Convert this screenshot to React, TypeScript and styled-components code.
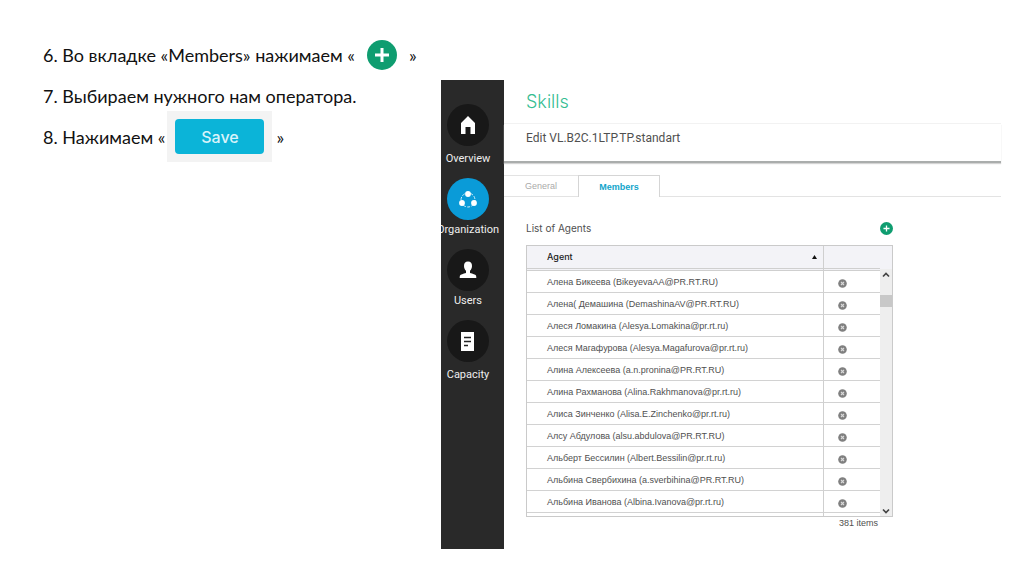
import React from "react";
import styled, { createGlobalStyle } from "styled-components";

const GlobalStyle = createGlobalStyle`
  *, *::before, *::after { box-sizing: border-box; }
  body { margin: 0; background: #fff; }
  button { font: inherit; border: 0; padding: 0; background: none; cursor: pointer; }
  h1, h2, p, ol { margin: 0; padding: 0; font-weight: 400; }
`;

const Slide = styled.main`
  display: grid;
  grid-template-columns: 398px minmax(0, 1fr);
  align-items: start;
  padding: 34px 23px 25px 43px;
`;

const Steps = styled.ol`
  list-style: none;
  font-family: Lato, "Open Sans", sans-serif;
  font-size: 18px;
  line-height: 24px;
  color: #111;
`;

const Step = styled.li`
  display: flex;
  align-items: center;
  height: 41px;
  white-space: nowrap;
`;

const AddButton = styled.button<{ $size: number; $gap?: number }>`
  display: block;
  flex: none;
  width: ${(p) => p.$size}px;
  height: ${(p) => p.$size}px;
  margin: 0 ${(p) => p.$gap ?? 0}px;
  svg { display: block; width: 100%; height: 100%; }
`;

const SaveFrame = styled.span`
  display: inline-flex;
  padding: 8px;
  margin: 0 4px 0 2px;
  background: #f3f3f3;
`;

const SaveButton = styled.button`
  width: 89px;
  height: 35px;
  border-radius: 4px;
  background: #0bb4d8;
  color: #d9f3fa;
  font-family: Inter, sans-serif;
  font-size: 16px;
  font-weight: 500;
`;

const AppWindow = styled.section`
  display: grid;
  grid-template-columns: 63px minmax(0, 1fr);
  margin-top: 46px;
  min-height: 469px;
  font-family: "Liberation Sans", Arial, sans-serif;
  color: #505050;
`;

const Sidebar = styled.nav`
  display: flex;
  flex-direction: column;
  align-items: center;
  gap: 12px;
  padding: 24px 9px 0 0;
  overflow: hidden;
  background: #292929;
`;

const NavLink = styled.a<{ $gap: number }>`
  display: flex;
  flex-direction: column;
  align-items: center;
  gap: ${(p) => p.$gap}px;
  color: #eee;
  font-family: Roboto, sans-serif;
  font-size: 11px;
  line-height: 14px;
  text-decoration: none;
`;

const NavIcon = styled.span<{ $active?: boolean }>`
  display: flex;
  align-items: center;
  justify-content: center;
  width: 42px;
  height: 42px;
  border-radius: 50%;
  background: ${(p) => (p.$active ? "#0a9bd8" : "#181818")};
`;

const Content = styled.div`
  min-width: 0;
`;

const Title = styled.h1`
  padding: 10px 22px 9px;
  border-bottom: 1px solid #f2f2f2;
  color: #35bd91;
  font-family: Inter, sans-serif;
  font-size: 18px;
  font-weight: 300;
  line-height: 24px;
`;

const Subtitle = styled.h2`
  padding: 5px 22px 14px;
  border-bottom: 2px solid #aaadac;
  box-shadow: 0 1px 1px #d4d4d4;
  font-family: Roboto, sans-serif;
  font-size: 12px;
  line-height: 18px;
`;

const Tabs = styled.div`
  display: flex;
  margin-top: 12px;
  &::after { content: ""; flex: 1; border-bottom: 1px solid #e3e3e3; }
`;

const Tab = styled.button<{ $active?: boolean }>`
  height: 22px;
  width: ${(p) => (p.$active ? 82 : 74)}px;
  border: 1px solid ${(p) => (p.$active ? "#d5d5d5" : "#e3e3e3")};
  border-width: ${(p) => (p.$active ? "1px 1px 0" : "1px 0")};
  color: ${(p) => (p.$active ? "#12a5cb" : "#aaa")};
  font-size: 9px;
  font-weight: ${(p) => (p.$active ? 700 : 400)};
`;

const Agents = styled.div`
  width: 367px;
  max-width: 100%;
  margin: 21px 0 0 22px;
`;

const AgentsHead = styled.div`
  display: flex;
  justify-content: space-between;
  align-items: center;
  height: 20px;
  margin-bottom: 7px;
  font-family: Inter, sans-serif;
  font-size: 10px;
  line-height: 16px;
`;

const GridFrame = styled.div`
  display: flex;
  height: 272px;
  overflow: hidden;
  border: 1px solid #cacaca;
`;

const Table = styled.table`
  flex: 1;
  align-self: flex-start;
  border-collapse: separate;
  border-spacing: 0;
  table-layout: fixed;
  font-size: 9px;
  line-height: 12px;
`;

const HeadCell = styled.th<{ $width?: number }>`
  width: ${(p) => (p.$width ? p.$width + "px" : "auto")};
  height: 25px;
  padding: 0 6px 0 20px;
  border-bottom: 3px double #cfcfcf;
  background: #f3f3f7;
  color: #222;
  font-family: Inter, sans-serif;
  font-weight: 500;
  text-align: left;
  & + & { border-left: 1px solid #cfcfcf; }
`;

const SortButton = styled.button`
  display: flex;
  width: 100%;
  align-items: center;
  justify-content: space-between;
  color: inherit;
`;

const Cell = styled.td`
  height: 22px;
  padding: 0 0 0 20px;
  border-bottom: 1px solid #d2d2d2;
  white-space: nowrap;
  & + & { padding: 3px 0 0 14px; border-left: 1px solid #cfcfcf; }
`;

const RemoveButton = styled.button`
  display: block;
  width: 9px;
  height: 9px;
  svg { display: block; }
`;

const Scroll = styled.div`
  display: flex;
  flex-direction: column;
  width: 12px;
  padding-top: 23px;
  background: linear-gradient(#f3f3f7 23px, #eee 23px);
`;

const ScrollButton = styled.button`
  display: flex;
  justify-content: center;
  align-items: center;
  width: 100%;
  height: 11px;
`;

const Track = styled.div`
  flex: 1;
  padding-top: 15px;
`;

const Thumb = styled.div`
  height: 12px;
  background: #c8c8c8;
`;

const Count = styled.p`
  padding-right: 15px;
  font-size: 9px;
  line-height: 12px;
  text-align: right;
`;

const PlusIcon = () => (
  <svg viewBox="0 0 30 30" aria-hidden="true">
    <circle cx="15" cy="15" r="15" fill="#0f9d70" />
    <path d="M15 8v14M8 15h14" stroke="#fff" strokeWidth="3" />
  </svg>
);

const HomeIcon = () => (
  <svg width="16" height="20" viewBox="0 0 16 20" aria-hidden="true">
    <path d="M8 1 15 8v11h-4.500v-7h-5v7H1V8z" fill="#fff" />
  </svg>
);

const OrgIcon = () => (
  <svg width="20" height="20" viewBox="0 0 20 20" aria-hidden="true">
    <circle cx="10" cy="11" r="7" fill="none" stroke="#d5effa" strokeWidth="1" strokeDasharray="3 1.400" />
    <circle cx="10" cy="5" r="2.900" fill="#fff" />
    <circle cx="4" cy="14" r="2.900" fill="#fff" />
    <circle cx="16" cy="14" r="2.900" fill="#fff" />
  </svg>
);

const UserIcon = () => (
  <svg width="18" height="18" viewBox="0 0 18 18" aria-hidden="true">
    <path d="M9 .5c2.800 0 4 1.800 4 4.400 0 2.200-.9 3.800-2 4.800v2.300c2.700.9 5.500 1.300 6 2.600.2.600.3 1.400.3 2.400H.7c0-1 .1-1.800.3-2.400.5-1.300 3.300-1.700 6-2.600V9.700C5.900 8.700 5 7.100 5 4.900 5 2.300 6.200.5 9 .5z" fill="#fff" />
  </svg>
);

const DocIcon = () => (
  <svg width="13" height="19" viewBox="0 0 13 19" aria-hidden="true">
    <path d="M0 0h13v19H0z" fill="#fff" />
    <path d="M3 5.500h7M3 9.500h7M3 13.500h4" stroke="#222" strokeWidth="1.600" />
  </svg>
);

const RemoveIcon = () => (
  <svg width="9" height="9" viewBox="0 0 9 9" aria-hidden="true">
    <circle cx="4.500" cy="4.500" r="4.300" fill="#808080" />
    <path d="m3 3 3 3M6 3 3 6" stroke="#d8d8d8" strokeWidth="1.100" />
  </svg>
);

const Chevron = ({ down }: { down?: boolean }) => (
  <svg width="8" height="6" viewBox="0 0 8 6" aria-hidden="true">
    <path d={down ? "M1 1.500 4 4.500 7 1.500" : "M1 4.500 4 1.500 7 4.500"} fill="none" stroke="#444" strokeWidth="1.700" />
  </svg>
);

const navItems = [
  { label: "Overview", icon: <HomeIcon />, gap: 6 },
  { label: "Organization", icon: <OrgIcon />, gap: 3, active: true },
  { label: "Users", icon: <UserIcon />, gap: 3 },
  { label: "Capacity", icon: <DocIcon />, gap: 6 },
];

const agents = [
  "Алена Бикеева (BikeyevaAA@PR.RT.RU)",
  "Алена( Демашина (DemashinaAV@PR.RT.RU)",
  "Алеся Ломакина (Alesya.Lomakina@pr.rt.ru)",
  "Алеся Магафурова (Alesya.Magafurova@pr.rt.ru)",
  "Алина Алексеева (a.n.pronina@PR.RT.RU)",
  "Алина Рахманова (Alina.Rakhmanova@pr.rt.ru)",
  "Алиса Зинченко (Alisa.E.Zinchenko@pr.rt.ru)",
  "Алсу Абдулова (alsu.abdulova@PR.RT.RU)",
  "Альберт Бессилин (Albert.Bessilin@pr.rt.ru)",
  "Альбина Свербихина (a.sverbihina@PR.RT.RU)",
  "Альбина Иванова (Albina.Ivanova@pr.rt.ru)",
];

export default function App() {
  return (
    <>
      <GlobalStyle />
      <Slide>
        <Steps>
          <Step>
            6. Во вкладке «Members» нажимаем «
            <AddButton $size={30} $gap={12} aria-label="Add"><PlusIcon /></AddButton>
            »
          </Step>
          <Step>7. Выбираем нужного нам оператора.</Step>
          <Step>
            8. Нажимаем «
            <SaveFrame><SaveButton>Save</SaveButton></SaveFrame>
            »
          </Step>
        </Steps>
        <AppWindow>
          <Sidebar>
            {navItems.map((item) => (
              <NavLink key={item.label} href="#" $gap={item.gap}>
                <NavIcon $active={item.active}>{item.icon}</NavIcon>
                {item.label}
              </NavLink>
            ))}
          </Sidebar>
          <Content>
            <Title>Skills</Title>
            <Subtitle>Edit VL.B2C.1LTP.TP.standart</Subtitle>
            <Tabs role="tablist">
              <Tab role="tab" aria-selected={false}>General</Tab>
              <Tab role="tab" aria-selected $active>Members</Tab>
            </Tabs>
            <Agents>
              <AgentsHead>
                List of Agents
                <AddButton $size={13} aria-label="Add agent"><PlusIcon /></AddButton>
              </AgentsHead>
              <GridFrame>
                <Table>
                  <thead>
                    <tr>
                      <HeadCell>
                        <SortButton>
                          Agent
                          <svg width="5" height="4" viewBox="0 0 5 4" aria-hidden="true">
                            <path d="M2.500 0 5 4H0z" fill="#111" />
                          </svg>
                        </SortButton>
                      </HeadCell>
                      <HeadCell $width={57} aria-label="Remove" />
                    </tr>
                  </thead>
                  <tbody>
                    {agents.map((agent) => (
                      <tr key={agent}>
                        <Cell>{agent}</Cell>
                        <Cell>
                          <RemoveButton aria-label={`Remove ${agent}`}><RemoveIcon /></RemoveButton>
                        </Cell>
                      </tr>
                    ))}
                    <tr><Cell /><Cell /></tr>
                  </tbody>
                </Table>
                <Scroll>
                  <ScrollButton aria-label="Scroll up"><Chevron /></ScrollButton>
                  <Track><Thumb /></Track>
                  <ScrollButton aria-label="Scroll down"><Chevron down /></ScrollButton>
                </Scroll>
              </GridFrame>
              <Count>381 items</Count>
            </Agents>
          </Content>
        </AppWindow>
      </Slide>
    </>
  );
}
